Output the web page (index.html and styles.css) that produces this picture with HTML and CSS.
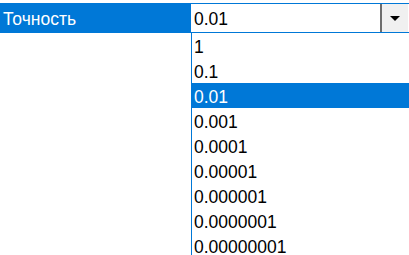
FILE: index.html
```html
<!DOCTYPE html>
<html lang="ru">
<head>
    <meta charset="UTF-8">
    <title>Свойства</title>
    <link rel="stylesheet" href="styles.css">
</head>
<body>

<div class="prop-grid">
    <!-- Строка свойства: Точность -->
    <div class="prop-row">
        <div class="prop-label">Точность</div>
        <div class="combo">
            <span class="combo-value">0.01</span>
            <span class="combo-button">
                <svg width="10" height="5" viewBox="0 0 10 5"><polygon points="0,0 10,0 5,5" fill="#000"/></svg>
            </span>
        </div>
    </div>

    <!-- Открытый выпадающий список -->
    <ul class="combo-list">
        <li>1</li>
        <li>0.1</li>
        <li class="selected">0.01</li>
        <li>0.001</li>
        <li>0.0001</li>
        <li>0.00001</li>
        <li>0.000001</li>
        <li>0.0000001</li>
        <li>0.00000001</li>
    </ul>
</div>

</body>
</html>
```

FILE: styles.css
```css
body {
    margin: 0;
    padding: 0;
    background-color: #FFF;
    font-family: "Liberation Sans", Arial, sans-serif;
    font-size: 17.5px;
    color: #000;
}
.prop-grid {
    width: 409px;
    padding-top: 3px;
    overflow: hidden;
}
.prop-row {
    display: flex;
    height: 30px;
}
.prop-label {
    width: 191px;
    flex-shrink: 0;
    box-sizing: border-box;
    padding: 3px 0 0 3px;
    line-height: 27px;
    background-color: #0078D7;
    color: #FFF;
}
.combo {
    display: flex;
    width: 219px;
    flex-shrink: 0;
    box-sizing: border-box;
    border: 1px solid #0078D7;
    border-left: none;
}
.combo-value {
    flex: 1;
    padding: 2px 0 0 3px;
    line-height: 26px;
}
.combo-button {
    display: flex;
    align-items: center;
    justify-content: center;
    width: 28px;
    box-sizing: border-box;
    margin-right: 1px;
    border-left: 2px solid #6D6D6D;
    background-color: #F0F0F0;
}
.combo-list {
    width: 218px;
    margin: 0 0 0 191px;
    padding: 0;
    list-style: none;
    box-sizing: border-box;
    border-left: 1px solid #0078D7;
}
.combo-list li {
    height: 25px;
    box-sizing: border-box;
    padding: 3px 0 0 2px;
    line-height: 22px;
}
.combo-list li.selected {
    background-color: #0078D7;
    color: #FFF;
}
```
